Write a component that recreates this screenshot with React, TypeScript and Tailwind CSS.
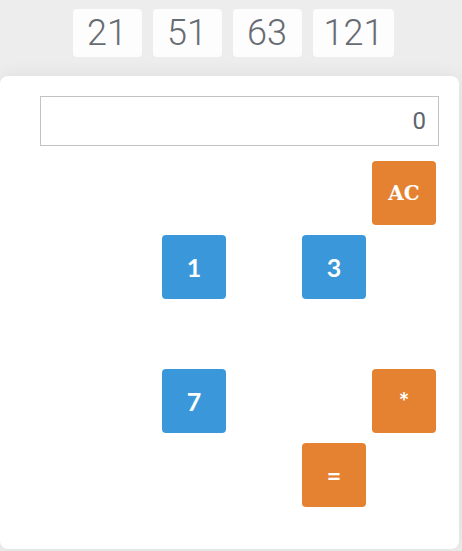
import React from "react";

const Btn = ({ label, color, mono, col }: { label: string; color: "blue" | "orange"; mono?: boolean; col: string }) => (
  <div
    className={`${col} w-[64px] h-[64px] rounded-[4px] flex items-center justify-center text-white font-bold leading-none ${
      color === "blue" ? "bg-[#3a98da]" : "bg-[#e58231]"
    } ${mono ? "font-['DejaVu_Serif',serif] text-[20px]" : "font-['Lato',sans-serif] text-[25px]"}`}
  >
    {label}
  </div>
);

export default function App() {
  return (
    <div className="w-[462px] h-[551px] overflow-hidden bg-[#ededed] flex flex-col">
      <div className="flex justify-center gap-[11px] pt-[9px] pl-[5px] font-['Roboto',sans-serif]">
        {["21", "51", "63", "121"].map((n) => (
          <div
            key={n}
            className="h-[48px] min-w-[69px] px-[11px] bg-[#fdfdfd] rounded-[4px] flex items-center justify-center text-[36px] font-light text-[#676b72] leading-none"
          >
            {n}
          </div>
        ))}
      </div>
      <div className="mt-[19px] w-[459px] h-[473px] bg-white rounded-[8px] shadow-[0_0_18px_rgba(0,0,0,0.07)] pt-[20px] pl-[40px] pr-[20px]">
        <div className="h-[50px] border border-[#c3c3c3] flex items-center justify-end pr-[12px] text-[24px] text-[#5f646c] font-['Roboto',sans-serif]">
          0
        </div>
        <div className="mt-[15px] mr-[3px] flex justify-end">
          <div className="grid grid-cols-[64px_64px_64px_64px] gap-x-[6px] grid-rows-[64px_64px_50px_64px_64px] gap-y-[10px]">
            <Btn label="AC" color="orange" mono col="col-start-4 row-start-1" />
            <Btn label="1" color="blue" col="col-start-1 row-start-2" />
            <Btn label="3" color="blue" col="col-start-3 row-start-2" />
            <Btn label="7" color="blue" col="col-start-1 row-start-4" />
            <Btn label="*" color="orange" col="col-start-4 row-start-4" />
            <Btn label="=" color="orange" col="col-start-3 row-start-5" />
          </div>
        </div>
      </div>
    </div>
  );
}
